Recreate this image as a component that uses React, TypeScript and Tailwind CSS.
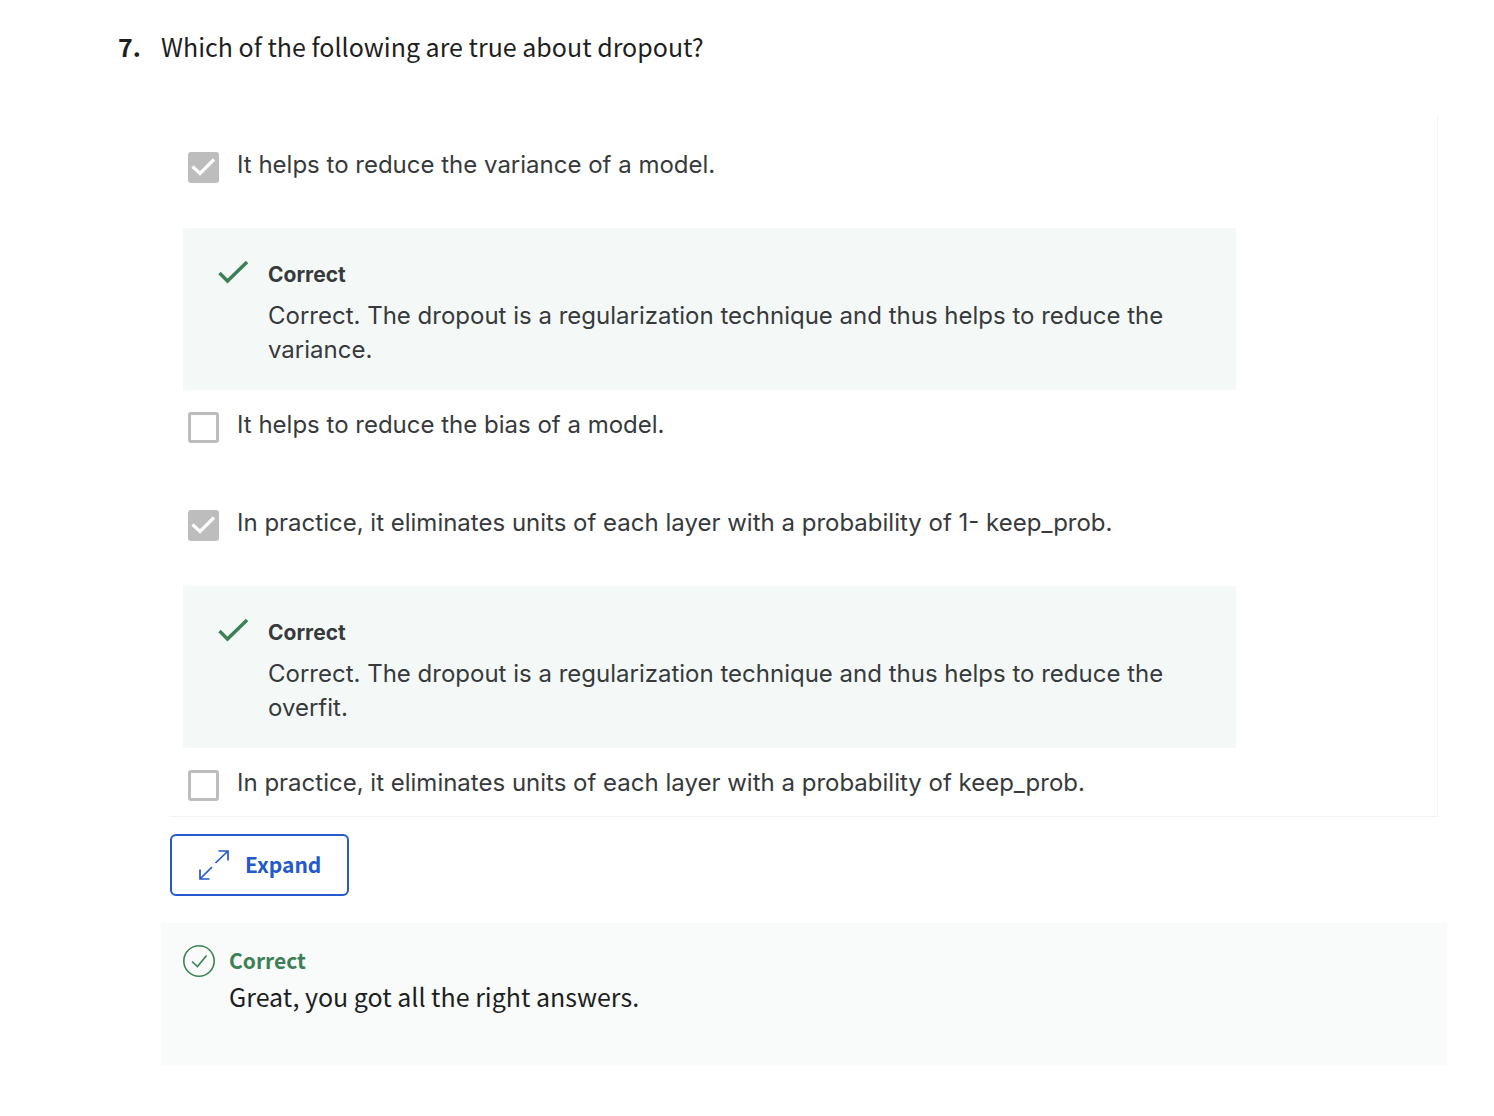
import React from "react";

const sans = "font-['Inter',sans-serif]";

function Option({ id, label, checked }: { id: string; label: string; checked?: boolean }) {
  return (
    <div className="flex items-start gap-[18px] pl-[5px]">
      <span className="relative mt-1 size-[31px] shrink-0">
        <input
          id={id}
          type="checkbox"
          defaultChecked={checked}
          className="peer block size-[31px] appearance-none rounded-[3px] border-[3px] border-[#bdbdbd] bg-white checked:bg-[#bdbdbd]"
        />
        <svg viewBox="0 0 31 31" className="pointer-events-none absolute inset-0 hidden size-[31px] peer-checked:block" fill="none" stroke="#fff" strokeWidth="3.2">
          <path d="M4.5 14.5 12 21.5 26 7.5" />
        </svg>
      </span>
      <label htmlFor={id} className="text-2xl leading-[34px] text-[#373a3c]">{label}</label>
    </div>
  );
}

function Feedback({ text }: { text: string }) {
  return (
    <section className="flex max-w-[1053px] gap-5 bg-[#f4f9f7] px-[35px] pt-[30px] pb-[23px] text-[#373a3c]">
      <svg viewBox="0 0 30 24" className="mt-[2px] h-6 w-[30px] shrink-0" fill="none" stroke="#3c8055" strokeWidth="3.4">
        <path d="M1.5 13 9.5 21 29 2" />
      </svg>
      <div>
        <h2 className="text-[21px] leading-[34px] font-bold">Correct</h2>
        <p className="mt-[7px] text-2xl leading-[34px]">{text}</p>
      </div>
    </section>
  );
}

export default function App() {
  return (
    <main className="bg-white pt-[26px] pr-[47px] pb-[50px] pl-[118px] font-['Noto_Sans_CJK_SC',sans-serif] text-[#1f1f1f]">
      <h1 className="flex text-[25px] leading-10">
        <span className="w-[43px] shrink-0 font-bold">7.</span>
        <span>Which of the following are true about dropout?</span>
      </h1>
      <div className="ml-[43px]">
        <div className={`mt-[49px] mr-[9px] ml-[9px] border-r border-b border-[#f3f3f3] pt-[33px] pr-[12px] pb-[15px] pl-[13px] ${sans}`}>
          <Option id="variance" label="It helps to reduce the variance of a model." checked />
          <div className="mt-[45px]">
            <Feedback text="Correct. The dropout is a regularization technique and thus helps to reduce the variance." />
          </div>
          <div className="mt-[18px]">
            <Option id="bias" label="It helps to reduce the bias of a model." />
          </div>
          <div className="mt-[63px]">
            <Option id="one-minus-keep" label="In practice, it eliminates units of each layer with a probability of 1- keep_prob." checked />
          </div>
          <div className="mt-[45px]">
            <Feedback text="Correct. The dropout is a regularization technique and thus helps to reduce the overfit." />
          </div>
          <div className="mt-[18px]">
            <Option id="keep" label="In practice, it eliminates units of each layer with a probability of keep_prob." />
          </div>
        </div>
        <button type="button" className="mt-[17px] ml-[9px] flex h-[62px] items-center gap-4 rounded-md border-2 border-[#2459cb] pr-[26px] pl-[27px] text-[21px] font-bold text-[#2459cb]">
          <svg viewBox="0 0 30 30" className="size-[30px]" fill="none" stroke="currentColor" strokeWidth="1.7">
            <path d="M19.5 1H29V10.5M29 1 16.5 13M1 19.5V29H10.5M1 29 13 17" />
          </svg>
          Expand
        </button>
        <section className="mt-[27px] flex gap-[14px] bg-[#f8fbfa] pt-[21px] pb-[49px] pl-[22px]">
          <svg viewBox="0 0 32 32" className="mt-px size-8 shrink-0" fill="none" stroke="#3c8055" strokeWidth="1.6">
            <circle cx="16" cy="16" r="15.2" />
            <path d="M9 16.5 14.5 21.5 23.5 10.5" />
          </svg>
          <div>
            <h2 className="text-[21px] leading-8 font-bold text-[#3c8055]">Correct</h2>
            <p className="text-[25px] leading-10">Great, you got all the right answers.</p>
          </div>
        </section>
      </div>
    </main>
  );
}
